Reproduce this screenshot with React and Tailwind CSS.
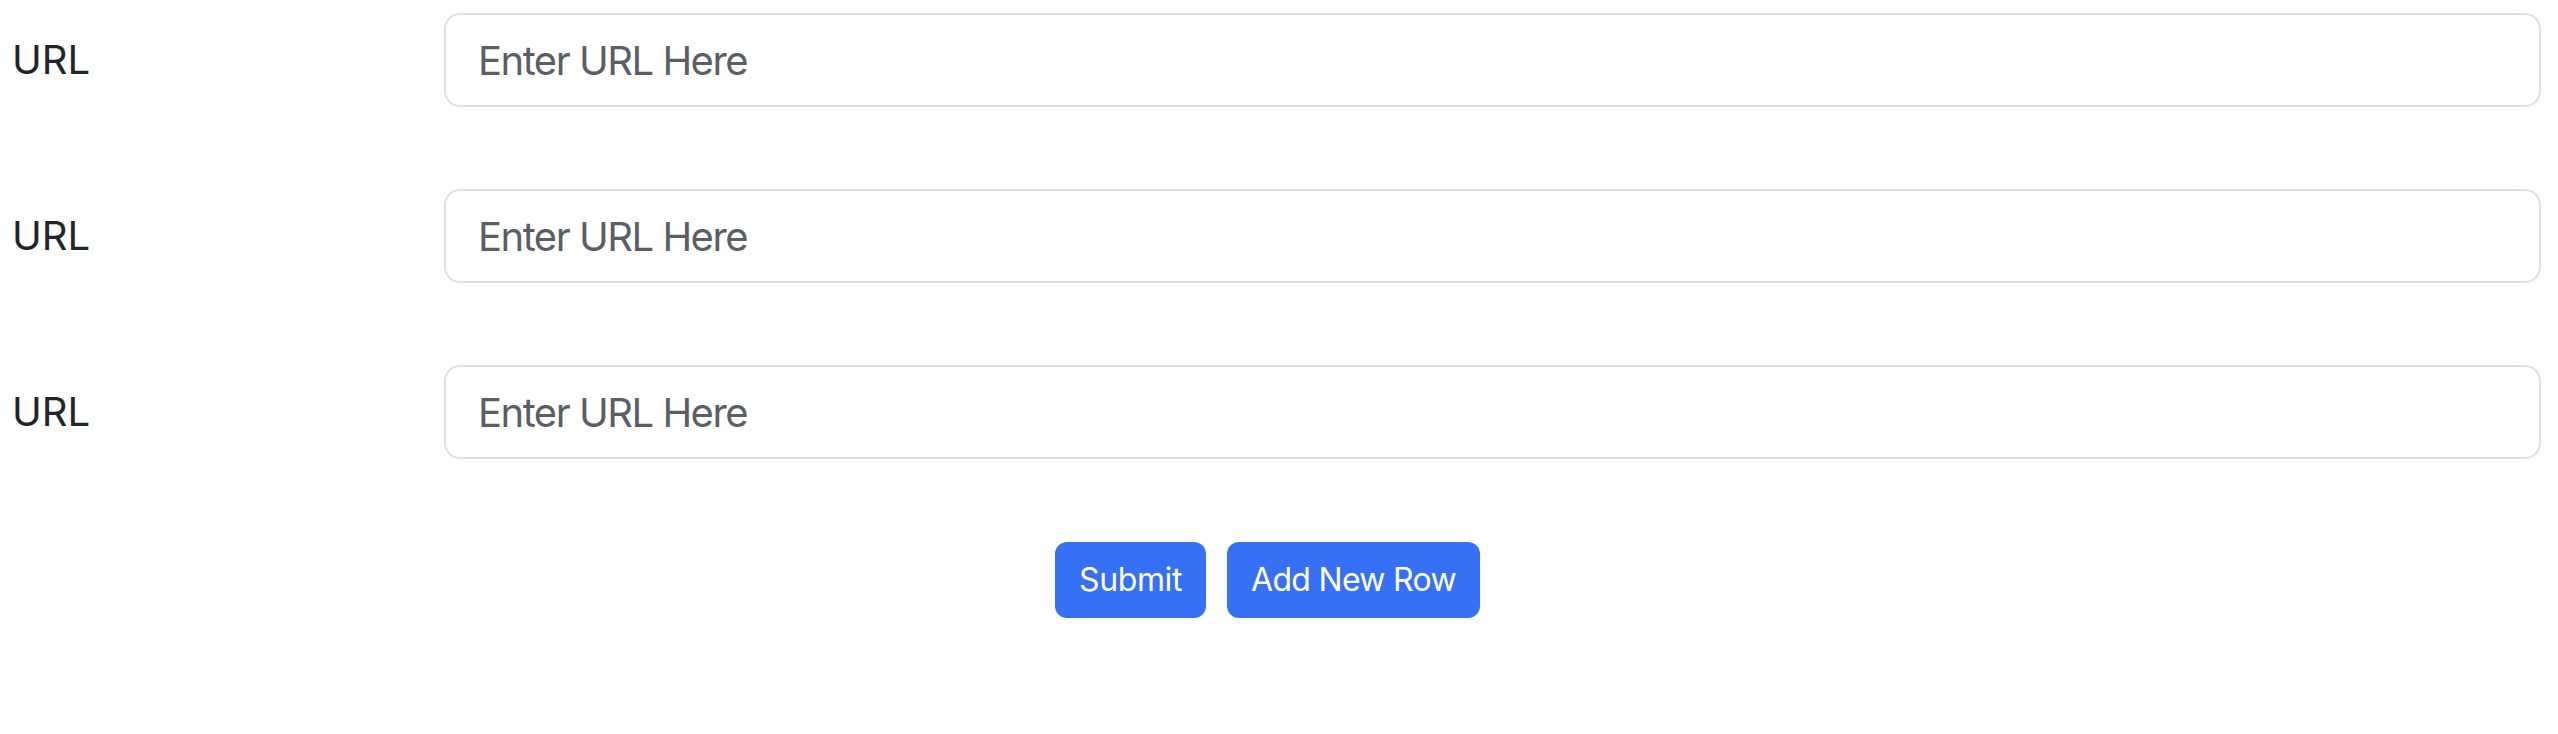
import React from "react";

const UrlRow = () => {
  return (
    <div className="flex items-center h-[94px]">
      <label className="w-[432px] text-[40px] leading-none text-[#212529]">URL</label>
      <input
        type="text"
        placeholder="Enter URL Here"
        className="flex-1 h-[94px] bg-white border-2 border-[#dee2e6] rounded-2xl px-8 text-[40px] tracking-[-1.5px] text-[#212529] placeholder:text-[#5b5f63] outline-none"
      />
    </div>
  );
};

const App = () => {
  return (
    <div
      className="min-h-[734px] bg-white pt-[13px] pl-3 pr-[17px]"
      style={{ fontFamily: "Inter, 'Noto Sans', sans-serif" }}
    >
      <div className="flex flex-col gap-[82px]">
        <UrlRow />
        <UrlRow />
        <UrlRow />
      </div>

      <div className="flex justify-center gap-[21px] mt-[83px] pr-[18px]">
        <button className="h-[76px] px-6 rounded-xl bg-[#3670f5] text-white text-[32px] tracking-[-0.4px] leading-none">
          Submit
        </button>
        <button className="h-[76px] px-6 rounded-xl bg-[#3670f5] text-white text-[32px] tracking-[-0.7px] leading-none">
          Add New Row
        </button>
      </div>
    </div>
  );
};

export default App;
